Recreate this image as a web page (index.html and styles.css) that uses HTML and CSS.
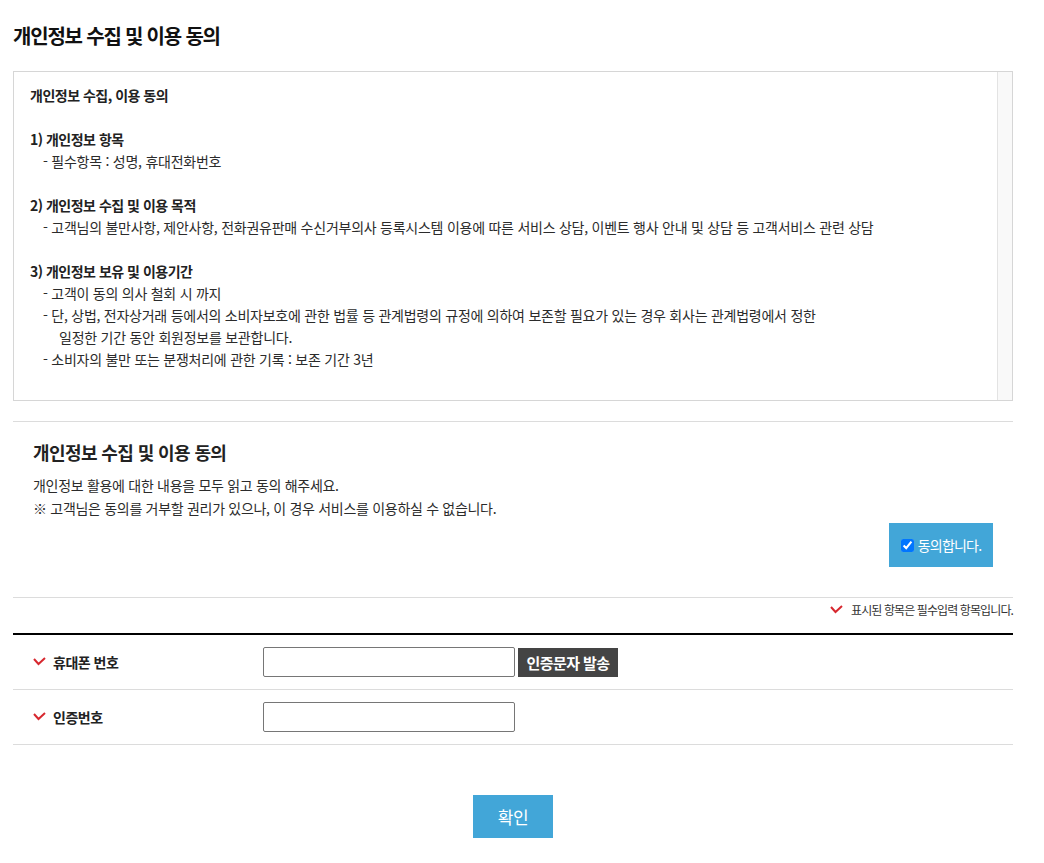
FILE: index.html
```html
<!DOCTYPE html>
<html lang="ko">
<head>
<meta charset="utf-8">
<title>개인정보 수집 및 이용 동의</title>
<link rel="stylesheet" href="styles.css">
</head>
<body>
<div class="wrap">
  <h1 class="page-title">개인정보 수집 및 이용 동의</h1>

  <div class="terms">
    <div class="terms-body">
      <p class="line strong">개인정보 수집, 이용 동의</p>
      <p class="line blank">&nbsp;</p>
      <p class="line strong">1) 개인정보 항목</p>
      <p class="line sub">- 필수항목 : 성명, 휴대전화번호</p>
      <p class="line blank">&nbsp;</p>
      <p class="line strong">2) 개인정보 수집 및 이용 목적</p>
      <p class="line sub">- 고객님의 불만사항, 제안사항, 전화권유판매 수신거부의사 등록시스템 이용에 따른 서비스 상담, 이벤트 행사 안내 및 상담 등 고객서비스 관련 상담</p>
      <p class="line blank">&nbsp;</p>
      <p class="line strong">3) 개인정보 보유 및 이용기간</p>
      <p class="line sub">- 고객이 동의 의사 철회 시 까지</p>
      <p class="line sub">- 단, 상법, 전자상거래 등에서의 소비자보호에 관한 법률 등 관계법령의 규정에 의하여 보존할 필요가 있는 경우 회사는 관계법령에서 정한</p>
      <p class="line sub2">일정한 기간 동안 회원정보를 보관합니다.</p>
      <p class="line sub">- 소비자의 불만 또는 분쟁처리에 관한 기록 : 보존 기간 3년</p>
    </div>
    <div class="terms-scroll"></div>
  </div>

  <section class="agree">
    <h2 class="agree-title">개인정보 수집 및 이용 동의</h2>
    <p class="agree-text">개인정보 활용에 대한 내용을 모두 읽고 동의 해주세요.<br>※ 고객님은 동의를 거부할 권리가 있으나, 이 경우 서비스를 이용하실 수 없습니다.</p>
    <div class="agree-action">
      <label class="agree-btn"><input type="checkbox" checked> 동의합니다.</label>
    </div>
  </section>

  <p class="req-note">
    <svg class="chk" width="13" height="9" viewBox="0 0 13 9"><polyline points="1,2 5.5,7 12,1" fill="none" stroke="#d7282f" stroke-width="2"/></svg>
    표시된 항목은 필수입력 항목입니다.
  </p>

  <div class="form">
    <div class="form-row">
      <div class="form-label">
        <svg class="chk" width="13" height="9" viewBox="0 0 13 9"><polyline points="1,2 5.5,7 12,1" fill="none" stroke="#d7282f" stroke-width="2"/></svg>
        휴대폰 번호
      </div>
      <div class="form-field">
        <input type="text" class="inp">
        <button type="button" class="btn-dark">인증문자 발송</button>
      </div>
    </div>
    <div class="form-row">
      <div class="form-label">
        <svg class="chk" width="13" height="9" viewBox="0 0 13 9"><polyline points="1,2 5.5,7 12,1" fill="none" stroke="#d7282f" stroke-width="2"/></svg>
        인증번호
      </div>
      <div class="form-field">
        <input type="text" class="inp">
      </div>
    </div>
  </div>

  <div class="submit">
    <button type="button" class="btn-ok">확인</button>
  </div>
</div>
</body>
</html>
```

FILE: styles.css
```css
* { box-sizing: border-box; }
html, body { margin: 0; padding: 0; background: #fff; }
body {
  font-family: "Noto Sans CJK KR", "Noto Sans", sans-serif;
  color: #333;
  font-size: 14px;
}
.wrap {
  width: 1013px;
  padding-left: 13px;
}
.page-title {
  margin: 0 0 21px;
  padding-top: 22px;
  font-size: 20px;
  line-height: 28px;
  font-weight: 700;
  letter-spacing: -1.2px;
  color: #111;
}
.terms {
  display: flex;
  height: 330px;
  border: 1px solid #d6d6d6;
}
.terms-body {
  flex: 1;
  padding: 12px 16px;
}
.line {
  margin: 0;
  font-size: 14px;
  line-height: 22px;
  letter-spacing: -0.25px;
  color: #2b2b2b;
}
.line.strong { font-weight: 700; color: #222; letter-spacing: -0.5px; }
.line.sub { padding-left: 13px; }
.line.sub2 { padding-left: 29px; }
.terms-scroll {
  width: 15px;
  border-left: 1px solid #e3e3e3;
  background: #f9f9f9;
}
.agree {
  margin-top: 20px;
  border-top: 1px solid #dcdcdc;
  border-bottom: 1px solid #dcdcdc;
  padding: 17px 20px 30px;
}
.agree-title {
  margin: 0;
  font-size: 18px;
  line-height: 26px;
  font-weight: 700;
  letter-spacing: -0.6px;
  color: #222;
}
.agree-text {
  margin: 9px 0 0;
  font-size: 14px;
  line-height: 23px;
  letter-spacing: -0.3px;
  color: #2b2b2b;
}
.agree-action {
  display: flex;
  justify-content: flex-end;
  margin-top: 3px;
}
.agree-btn {
  display: flex;
  align-items: center;
  justify-content: center;
  width: 104px;
  height: 44px;
  background: #42a6d8;
  color: #fff;
  font-size: 14px;
  letter-spacing: -0.8px;
}
.agree-btn input {
  width: 13px;
  height: 13px;
  margin: 0 4px 0 0;
}
.req-note {
  display: flex;
  justify-content: flex-end;
  align-items: flex-start;
  gap: 8px;
  margin: 0;
  padding-top: 4px;
  height: 35px;
  font-size: 12px;
  line-height: 16px;
  letter-spacing: -0.9px;
  color: #333;
}
.req-note .chk { margin-top: 3px; }
.form {
  border-top: 2px solid #000;
}
.form-row {
  display: flex;
  align-items: center;
  padding: 12px 0;
  border-bottom: 1px solid #dcdcdc;
}
.form-label {
  display: flex;
  align-items: center;
  gap: 7px;
  width: 250px;
  padding-left: 20px;
  font-size: 14px;
  font-weight: 700;
  letter-spacing: -0.5px;
  color: #222;
}
.form-label .chk { margin-top: -2px; }
.form-field {
  display: flex;
  align-items: center;
  gap: 3px;
}
.inp {
  width: 252px;
  height: 30px;
  border: 1px solid #767676;
  border-radius: 2px;
  padding: 0 4px;
  font: inherit;
}
.btn-dark {
  width: 100px;
  height: 29px;
  border: 0;
  padding: 0;
  background: #444;
  color: #fff;
  font-family: inherit;
  font-size: 15px;
  font-weight: 700;
  letter-spacing: -0.6px;
}
.submit {
  display: flex;
  justify-content: center;
  margin-top: 50px;
}
.btn-ok {
  width: 80px;
  height: 43px;
  border: 0;
  background: #42a6d8;
  color: #fff;
  font-family: inherit;
  font-size: 17px;
  letter-spacing: -0.5px;
}
```
